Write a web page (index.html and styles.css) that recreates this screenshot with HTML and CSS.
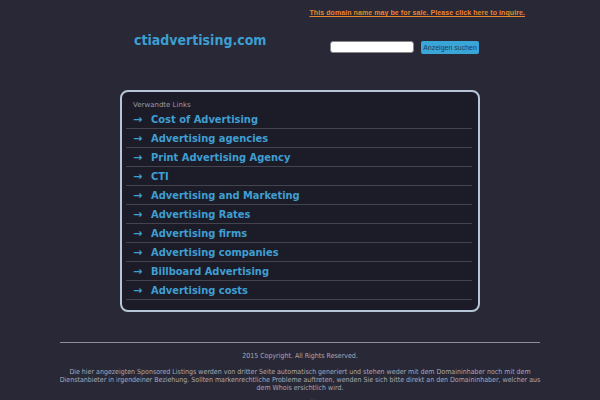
FILE: index.html
```html
<!DOCTYPE html>
<html>
<head>
<meta charset="utf-8">
<link rel="stylesheet" href="styles.css">
</head>
<body>
<div class="wrap">
  <div class="topbar"><a href="#" class="sale">This domain name may be for sale. Please click here to inquire.</a></div>
  <div class="header">
    <div class="title">ctiadvertising.com</div>
    <form class="search">
      <input class="search-input" type="text">
      <button class="search-btn" type="button">Anzeigen suchen</button>
    </form>
  </div>
  <div class="box">
    <div class="box-label">Verwandte Links</div>
    <ul class="links">
      <li class="link"><span class="arrow">&#x2192;</span><a href="#">Cost of Advertising</a></li>
      <li class="link"><span class="arrow">&#x2192;</span><a href="#">Advertising agencies</a></li>
      <li class="link"><span class="arrow">&#x2192;</span><a href="#">Print Advertising Agency</a></li>
      <li class="link"><span class="arrow">&#x2192;</span><a href="#">CTI</a></li>
      <li class="link"><span class="arrow">&#x2192;</span><a href="#">Advertising and Marketing</a></li>
      <li class="link"><span class="arrow">&#x2192;</span><a href="#">Advertising Rates</a></li>
      <li class="link"><span class="arrow">&#x2192;</span><a href="#">Advertising firms</a></li>
      <li class="link"><span class="arrow">&#x2192;</span><a href="#">Advertising companies</a></li>
      <li class="link"><span class="arrow">&#x2192;</span><a href="#">Billboard Advertising</a></li>
      <li class="link"><span class="arrow">&#x2192;</span><a href="#">Advertising costs</a></li>
    </ul>
  </div>
  <div class="footer">
    <p class="copy">2015 Copyright. All Rights Reserved.</p>
    <p class="disclaimer">Die hier angezeigten Sponsored Listings werden von dritter Seite automatisch generiert und stehen weder mit dem Domaininhaber noch mit dem Dienstanbieter in irgendeiner Beziehung. Sollten markenrechtliche Probleme auftreten, wenden Sie sich bitte direkt an den Domaininhaber, welcher aus dem Whois ersichtlich wird.</p>
    <p class="privacy">Privacy Policy</p>
  </div>
</div>
</body>
</html>
```
FILE: styles.css
```css
html, body {
  margin: 0;
  padding: 0;
  background: #282837;
}
.wrap {
  width: 480px;
  margin: 0 auto;
}
.topbar {
  text-align: right;
  padding: 5px 15px 0 0;
  height: 14px;
  line-height: 9px;
}
.sale {
  font-family: "Liberation Sans", Arial, sans-serif;
  font-weight: bold;
  font-size: 7px;
  letter-spacing: 0.08px;
  color: #e8862c;
  text-decoration: underline;
}
.header {
  display: flex;
  align-items: flex-start;
  padding-left: 74px;
  height: 71px;
}
.title {
  font-family: "DejaVu Sans Condensed", "DejaVu Sans", sans-serif;
  font-weight: bold;
  font-size: 14px;
  color: #3d9ed0;
  line-height: 17px;
  margin-top: 13px;
  width: 196px;
}
.search {
  display: flex;
  margin: 22px 0 0 0;
  gap: 7px;
}
.search-input {
  box-sizing: border-box;
  width: 84px;
  height: 12px;
  border: 1px solid #888;
  border-radius: 3px;
  background: #fff;
  padding: 0;
  margin: 0;
}
.search-btn {
  box-sizing: border-box;
  width: 58px;
  height: 13px;
  border: none;
  border-radius: 2px;
  background: #3aa6d8;
  color: #1c3a5a;
  font-family: "Liberation Sans", Arial, sans-serif;
  font-size: 7px;
  padding: 0;
  margin: 0;
  line-height: 13px;
}
.box {
  box-sizing: border-box;
  width: 360px;
  margin: 0 auto;
  border: 2px solid #b7c6d6;
  border-radius: 8px;
  background: #1c1c28;
  padding: 8px 6px 10px 4px;
}
.box-label {
  font-family: "DejaVu Sans", sans-serif;
  font-size: 7px;
  color: #9a9aa6;
  padding-left: 7px;
  line-height: 10px;
  margin-bottom: 0;
}
.links {
  list-style: none;
  margin: 0;
  padding: 0;
}
.link {
  display: flex;
  align-items: center;
  height: 18px;
  border-bottom: 1px solid #44444f;
  padding-left: 7px;
  font-family: "DejaVu Sans Condensed", "DejaVu Sans", sans-serif;
  font-weight: bold;
  font-size: 11px;
  color: #3f9fd2;
}
.arrow {
  width: 18px;
  font-family: "DejaVu Sans", sans-serif;
  font-size: 11px;
  font-weight: bold;
}
.link a {
  color: #3f9fd2;
  text-decoration: none;
}
.footer {
  margin-top: 30px;
  border-top: 1px solid #8c8c9a;
  text-align: center;
  font-family: "DejaVu Sans Condensed", "DejaVu Sans", sans-serif;
  font-size: 7px;
  color: #a8a8b4;
  line-height: 8px;
}
.copy {
  margin: 9px 0 0 0;
}
.disclaimer {
  margin: 8px -6px 0 -6px;
}
.privacy {
  margin: 7px 0 0 0;
}
```
